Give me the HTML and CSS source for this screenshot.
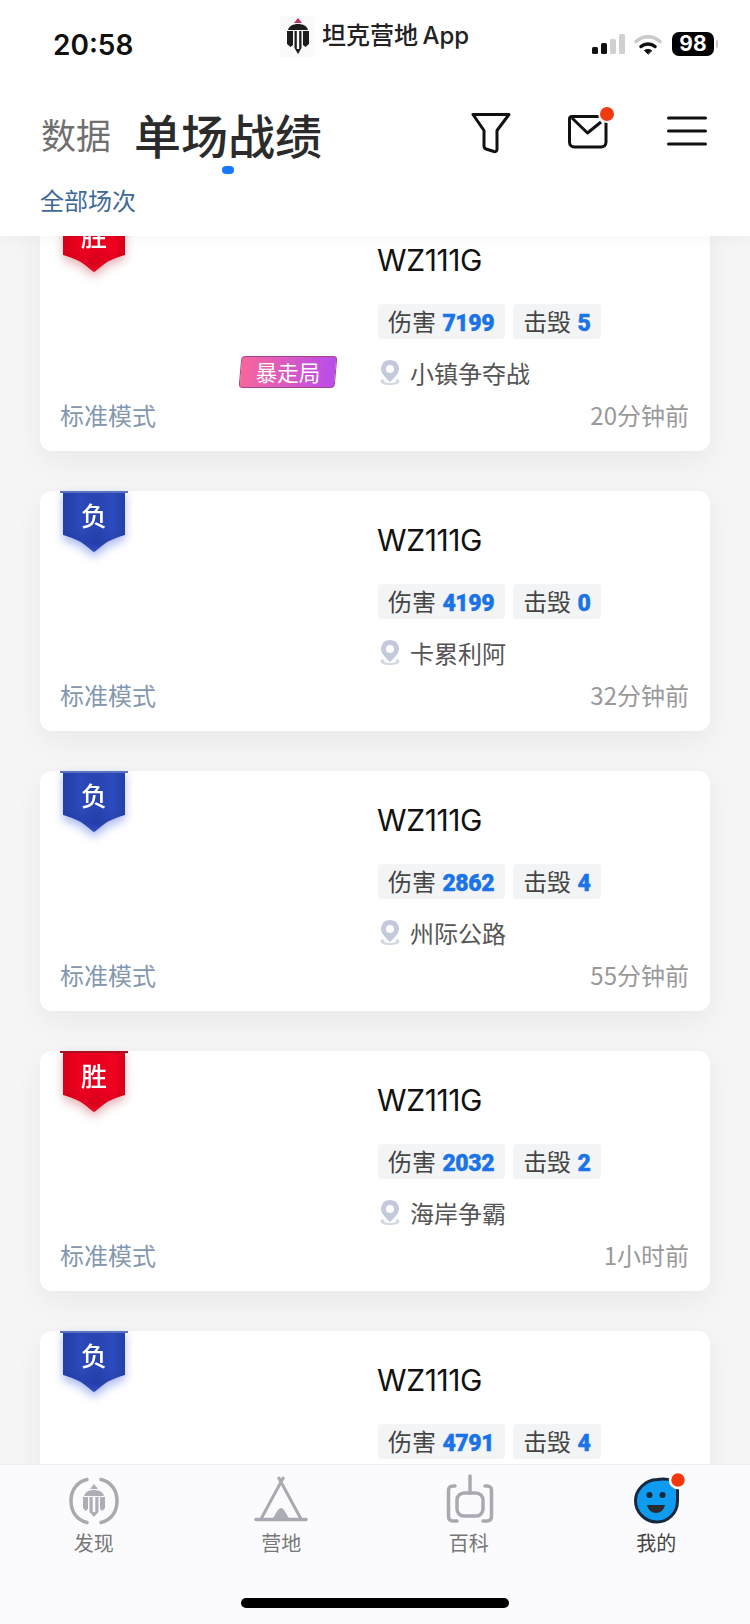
FILE: index.html
```html
<!DOCTYPE html>
<html lang="zh-CN">
<head>
  <meta charset="UTF-8" />
  <meta name="viewport" content="width=device-width, initial-scale=1" />
  <title>单场战绩</title>
  <link rel="stylesheet" href="styles.css">
</head>
<body>
  <div class="app">
    <header class="header">
      <div class="status">
        <span class="clock">20:58</span>
        <div class="source">
          <span class="source-logo">
            <svg width="22" height="36" viewBox="0 0 22 36">
              <path d="M11 0 15 5H7Z" fill="#c2305f"/>
              <path d="M11 6C16 6 20 8 21 12H1C2 8 6 6 11 6Z" fill="#1c1c1c"/>
              <path d="M0 13H6V27L3.500 29 0 26ZM16 13H22V26L18.500 29 16 27ZM7.500 13H9.800V31H12.200V13H14.500V30L11 36 7.500 30Z" fill="#1c1c1c"/>
            </svg>
          </span>
          <span class="source-name">坦克营地 App</span>
        </div>
        <div class="status-right">
          <svg width="33" height="20" viewBox="0 0 33 20">
            <rect x="0" y="13" width="6" height="7" rx="1.500" fill="#111"/>
            <rect x="9" y="9" width="6" height="11" rx="1.500" fill="#111"/>
            <rect x="18" y="5" width="6" height="15" rx="1.500" fill="#d0d0d0"/>
            <rect x="27" y="0" width="6" height="20" rx="1.500" fill="#d0d0d0"/>
          </svg>
          <svg class="wifi" width="28" height="21" viewBox="0 0 28 21" fill="none" stroke-linecap="round">
            <path d="M2 7.500C9 1 19 1 26 7.500" stroke="#c9c9c9" stroke-width="3.500"/>
            <path d="M7 12.500C11 9 17 9 21 12.500" stroke="#111" stroke-width="3.500"/>
            <path d="M14 20 10.500 16.500C12.500 15 15.500 15 17.500 16.500Z" fill="#111" stroke="#111"/>
          </svg>
          <span class="battery">98</span>
          <span class="battery-nub"></span>
        </div>
      </div>

      <div class="title-row">
        <nav class="tabs">
          <span class="tab">数据</span>
          <span class="tab tab-active">单场战绩</span>
        </nav>
        <div class="actions">
          <svg class="action-filter" width="40" height="42" viewBox="0 0 40 42" fill="none" stroke="#111" stroke-width="3" stroke-linejoin="round">
            <path d="M2 2.500H38L26 18.500V37C26 39 25 40 23 39.500L15 37C13.500 36.500 13 36 13 34V18.500Z"/>
          </svg>
          <svg class="action-mail" width="44" height="44" viewBox="0 0 44 44" fill="none" stroke="#111" stroke-width="3" stroke-linejoin="round">
            <path d="M35 9.500H5C3.500 9.500 2.500 10.500 2.500 12V35C2.500 38 4.500 40 7.500 40H34C37 40 39 38 39 35V12"/>
            <path d="M5 11 20.500 26 34 15"/>
            <circle cx="40" cy="7" r="8" fill="#f03a12" stroke="#fff" stroke-width="2"/>
          </svg>
          <svg class="action-menu" width="40" height="30" viewBox="0 0 40 30" stroke="#111" stroke-width="3" stroke-linecap="round">
            <path d="M1.500 2H38.500M1.500 15H38.500M1.500 28H38.500"/>
          </svg>
        </div>
      </div>

      <div class="filter-label">全部场次</div>
    </header>

    <main class="content">
      <div class="battle-list">

        <article class="card">
          <div class="card-body">
            <div class="card-left">
              <div class="ribbon ribbon-win"><div class="ribbon-cloth">胜</div></div>
              <span class="rampage">暴走局</span>
            </div>
            <div class="card-right">
              <h2 class="tank">WZ111G</h2>
              <div class="stats">
                <span class="stat">伤害 <b>7199</b></span>
                <span class="stat">击毁 <b>5</b></span>
              </div>
              <div class="map">
                <svg class="pin" width="24" height="26" viewBox="0 0 24 26"><path d="M5 19C1 20 1 25 12 25S23 20 19 19L17 20.500C19 21 18 23 12 23S5 21 7 20.500Z" fill="#d3d8e6"/><path d="M12 0C6 0 3 4 3 9 3 14 9 19 12 22 15 19 21 14 21 9 21 4 18 0 12 0ZM12 5A4 4 0 1 1 12 13 4 4 0 1 1 12 5Z" fill="#c3cadc" fill-rule="evenodd"/></svg>
                小镇争夺战
              </div>
            </div>
          </div>
          <div class="card-foot"><span class="mode">标准模式</span><span class="time">20分钟前</span></div>
        </article>

        <article class="card">
          <div class="card-body">
            <div class="card-left">
              <div class="ribbon ribbon-lose"><div class="ribbon-cloth">负</div></div>
            </div>
            <div class="card-right">
              <h2 class="tank">WZ111G</h2>
              <div class="stats">
                <span class="stat">伤害 <b>4199</b></span>
                <span class="stat">击毁 <b>0</b></span>
              </div>
              <div class="map">
                <svg class="pin" width="24" height="26" viewBox="0 0 24 26"><path d="M5 19C1 20 1 25 12 25S23 20 19 19L17 20.500C19 21 18 23 12 23S5 21 7 20.500Z" fill="#d3d8e6"/><path d="M12 0C6 0 3 4 3 9 3 14 9 19 12 22 15 19 21 14 21 9 21 4 18 0 12 0ZM12 5A4 4 0 1 1 12 13 4 4 0 1 1 12 5Z" fill="#c3cadc" fill-rule="evenodd"/></svg>
                卡累利阿
              </div>
            </div>
          </div>
          <div class="card-foot"><span class="mode">标准模式</span><span class="time">32分钟前</span></div>
        </article>

        <article class="card">
          <div class="card-body">
            <div class="card-left">
              <div class="ribbon ribbon-lose"><div class="ribbon-cloth">负</div></div>
            </div>
            <div class="card-right">
              <h2 class="tank">WZ111G</h2>
              <div class="stats">
                <span class="stat">伤害 <b>2862</b></span>
                <span class="stat">击毁 <b>4</b></span>
              </div>
              <div class="map">
                <svg class="pin" width="24" height="26" viewBox="0 0 24 26"><path d="M5 19C1 20 1 25 12 25S23 20 19 19L17 20.500C19 21 18 23 12 23S5 21 7 20.500Z" fill="#d3d8e6"/><path d="M12 0C6 0 3 4 3 9 3 14 9 19 12 22 15 19 21 14 21 9 21 4 18 0 12 0ZM12 5A4 4 0 1 1 12 13 4 4 0 1 1 12 5Z" fill="#c3cadc" fill-rule="evenodd"/></svg>
                州际公路
              </div>
            </div>
          </div>
          <div class="card-foot"><span class="mode">标准模式</span><span class="time">55分钟前</span></div>
        </article>

        <article class="card">
          <div class="card-body">
            <div class="card-left">
              <div class="ribbon ribbon-win"><div class="ribbon-cloth">胜</div></div>
            </div>
            <div class="card-right">
              <h2 class="tank">WZ111G</h2>
              <div class="stats">
                <span class="stat">伤害 <b>2032</b></span>
                <span class="stat">击毁 <b>2</b></span>
              </div>
              <div class="map">
                <svg class="pin" width="24" height="26" viewBox="0 0 24 26"><path d="M5 19C1 20 1 25 12 25S23 20 19 19L17 20.500C19 21 18 23 12 23S5 21 7 20.500Z" fill="#d3d8e6"/><path d="M12 0C6 0 3 4 3 9 3 14 9 19 12 22 15 19 21 14 21 9 21 4 18 0 12 0ZM12 5A4 4 0 1 1 12 13 4 4 0 1 1 12 5Z" fill="#c3cadc" fill-rule="evenodd"/></svg>
                海岸争霸
              </div>
            </div>
          </div>
          <div class="card-foot"><span class="mode">标准模式</span><span class="time">1小时前</span></div>
        </article>

        <article class="card">
          <div class="card-body">
            <div class="card-left">
              <div class="ribbon ribbon-lose"><div class="ribbon-cloth">负</div></div>
            </div>
            <div class="card-right">
              <h2 class="tank">WZ111G</h2>
              <div class="stats">
                <span class="stat">伤害 <b>4791</b></span>
                <span class="stat">击毁 <b>4</b></span>
              </div>
            </div>
          </div>
        </article>

      </div>
    </main>

    <footer class="tabbar">
      <div class="tabbar-items">
        <div class="tabbar-item">
          <svg width="52" height="50" viewBox="0 0 52 50" fill="none">
            <path d="M19 3.500C9 6 3 14 3 25S9 44 19 46.500M33 3.500C43 6 49 14 49 25S43 44 33 46.500" stroke="#a9a9b1" stroke-width="3.500" stroke-linecap="round"/>
            <path d="M26 8 30 13H22Z" fill="#adadb6"/>
            <path d="M26 14C31 14 35 16 36 20H16C17 16 21 14 26 14Z" fill="#adadb6"/>
            <path d="M15 21H20V33L17.500 35 15 32ZM32 21H37V32L34.500 35 32 33ZM21.500 21H24.700V36H27.300V21H30.500V36L26 41 21.500 36Z" fill="#adadb6"/>
          </svg>
          <span class="tabbar-label">发现</span>
        </div>
        <div class="tabbar-item">
          <svg width="52" height="50" viewBox="0 0 52 50" fill="none" stroke="#a9a9b1">
            <path d="M23.300 1 46 43M28.700 1 6 43" stroke-width="3"/>
            <path d="M1 43.500H51" stroke-width="3.500" stroke-linecap="round"/>
            <path d="M26 32C29 32 31 38 34 42H18C21 38 23 32 26 32Z" fill="#adadb6" stroke="none"/>
          </svg>
          <span class="tabbar-label">营地</span>
        </div>
        <div class="tabbar-item">
          <svg width="52" height="50" viewBox="0 0 52 50" fill="none" stroke="#a9a9b1" stroke-width="3.500" stroke-linecap="round">
            <path d="M27 0V17"/>
            <rect x="14" y="17" width="26" height="23" rx="7"/>
            <path d="M12 10H10C7 10 5.500 12 5.500 14V40C5.500 43 7 45 10 45H14M42 10H44C47 10 48.500 12 48.500 14V40C48.500 43 47 45 44 45H40"/>
          </svg>
          <span class="tabbar-label">百科</span>
        </div>
        <div class="tabbar-item tabbar-active">
          <svg class="face" width="52" height="50" viewBox="0 0 52 50">
            <path d="M27 3.500C38 2 47.500 4 47.500 14V25C47.500 37 38 46 27 46 15 46 5.500 36 5.500 25S15 4 27 3.500Z" fill="#0f9bf0" stroke="#16283c" stroke-width="3"/>
            <circle cx="19.500" cy="19" r="3" fill="#16283c"/>
            <circle cx="32.500" cy="19" r="3" fill="#16283c"/>
            <path d="M17 29H35C34 34 30 37 26 37S18 34 17 29Z" fill="#2a2a2e"/>
            <circle cx="48" cy="4" r="8" fill="#f5380c" stroke="#fff" stroke-width="2.500"/>
          </svg>
          <span class="tabbar-label">我的</span>
        </div>
      </div>
      <div class="home-bar"></div>
    </footer>
  </div>
</body>
</html>
```

FILE: styles.css
```css
* {
  box-sizing: border-box;
}
body {
  margin: 0;
  font-family: "Noto Sans CJK SC", "Liberation Sans", sans-serif;
  background: #f5f5f6;
  color: #333;
}
svg {
  display: block;
  overflow: visible;
}
.app {
  width: 750px;
  height: 1624px;
  display: flex;
  flex-direction: column;
  overflow: hidden;
}

/* header */
.header {
  position: relative;
  z-index: 2;
  height: 236px;
  flex: none;
  background: #fff;
  box-shadow: 0 4px 14px rgba(0,0,0,0.03);
}
.status {
  height: 88px;
  padding-left: 53px;
  display: grid;
  grid-template-columns: 227px 312px auto;
  align-items: center;
}
.clock {
  margin-top: 2px;
  font-family: Inter, sans-serif;
  font-size: 28px;
  font-weight: 600;
  color: #111;
}
.source {
  display: flex;
  align-items: center;
  gap: 7px;
  margin-top: -16px;
}
.source-logo {
  width: 35px;
  height: 41px;
  background: #fafafa;
  display: flex;
  align-items: center;
  justify-content: center;
}
.source-name {
  font-size: 24px;
  font-weight: 500;
  line-height: 32px;
  color: #222;
  font-family: Inter, "Noto Sans CJK SC", sans-serif;
  word-spacing: -2px;
}
.status-right {
  display: flex;
  align-items: center;
}
.wifi {
  margin-left: 9px;
}
.battery {
  width: 42px;
  height: 24px;
  margin-left: 10px;
  background: #000;
  border-radius: 7px;
  color: #fff;
  font-family: Inter, sans-serif;
  font-size: 21px;
  font-weight: 700;
  line-height: 24px;
  text-align: center;
}
.battery-nub {
  width: 2px;
  height: 8px;
  margin-left: 2px;
  border-radius: 0 2px 2px 0;
  background: #c8c8c8;
}
.title-row {
  height: 96px;
  padding: 0 43px 0 41px;
  display: flex;
  align-items: flex-start;
  justify-content: space-between;
}
.tabs {
  display: flex;
  align-items: center;
  gap: 23px;
  height: 92px;
}
.tab {
  font-size: 35px;
  line-height: 60px;
  color: #707070;
}
.tab-active {
  position: relative;
  font-size: 47px;
  font-weight: 500;
  color: #2b2b2b;
}
.tab-active::after {
  content: "";
  position: absolute;
  left: 88px;
  top: 62px;
  width: 12px;
  height: 8px;
  border-radius: 4px;
  background: #1677ff;
}
.actions {
  margin-top: 19px;
  display: flex;
  align-items: flex-start;
  gap: 56px;
}
.action-filter {
  margin-top: 5px;
}
.action-menu {
  margin-top: 9px;
}
.filter-label {
  padding-left: 40px;
  font-size: 24px;
  line-height: 32px;
  color: #3f6a98;
}

/* list */
.content {
  flex: 1;
  min-height: 0;
  overflow: hidden;
}
.battle-list {
  margin-top: -25px;
  padding: 0 40px;
  display: flex;
  flex-direction: column;
  gap: 40px;
}
.card {
  height: 240px;
  flex: none;
  background: #fff;
  border-radius: 12px;
  box-shadow: 0 10px 30px rgba(0,0,0,0.05);
}
.card-body {
  height: 182px;
  display: grid;
  grid-template-columns: 338px 1fr;
}
.card-left {
  display: flex;
  flex-direction: column;
  justify-content: space-between;
  padding: 0 40px 5px 23px;
}
.ribbon {
  position: relative;
  width: 62px;
  align-self: flex-start;
  filter: drop-shadow(0 5px 5px rgba(180,20,30,0.3));
}
.ribbon::before {
  content: "";
  position: absolute;
  left: -3px;
  top: 0;
  width: 68px;
  height: 2px;
  z-index: 1;
}
.ribbon-cloth {
  height: 61px;
  padding-top: 5px;
  clip-path: path("M0 0H62V44C55 46 46 49 40 54 36 57 33 60 31 61 29 60 26 57 22 54 16 49 7 46 0 44Z");
  color: #fff;
  font-size: 26px;
  font-weight: 500;
  line-height: 38px;
  text-align: center;
}
.ribbon-win::before {
  background: #a90f22;
}
.ribbon-win .ribbon-cloth {
  background: linear-gradient(180deg, transparent 62%, rgba(120,0,20,0.12) 85%, rgba(255,60,80,0.25)),
    linear-gradient(90deg, #d80018, #ee0020 30%, #e6001c 55%, #f20022 80%, #d80018);
}
.ribbon-lose {
  filter: drop-shadow(0 5px 5px rgba(50,80,220,0.4));
}
.ribbon-lose::before {
  background: #5d70c4;
}
.ribbon-lose .ribbon-cloth {
  background: linear-gradient(180deg, transparent 62%, rgba(10,30,120,0.15) 85%, rgba(90,120,240,0.25)),
    linear-gradient(90deg, #2340a6, #2b49ba 30%, #2744b0 55%, #2c4bbd 80%, #2340a6);
}
.rampage {
  position: relative;
  isolation: isolate;
  align-self: flex-end;
  width: 100px;
  height: 32px;
  color: #fff;
  font-size: 21.5px;
  line-height: 31px;
  text-align: center;
}
.rampage::before {
  content: "";
  position: absolute;
  inset: 0 2px;
  z-index: -1;
  transform: skewX(-5deg);
  border: 1px solid #a5458f;
  border-radius: 4px;
  background: linear-gradient(90deg, #f8669a, #b94cec);
}
.card-right {
  padding-top: 31px;
}
.tank {
  margin: 0 0 0 -1px;
  font-family: Inter, sans-serif;
  font-size: 30px;
  font-weight: 400;
  line-height: 36px;
  color: #111;
  letter-spacing: -0.4px;
}
.stats {
  margin-top: 26px;
  display: flex;
  gap: 8px;
}
.stat {
  height: 35px;
  padding: 0 11px 0 10px;
  border-radius: 4px;
  background: #f3f4f6;
  font-size: 24px;
  line-height: 34px;
  color: #444;
  white-space: nowrap;
  word-spacing: 1px;
}
.stat b {
  font-family: Roboto, sans-serif;
  font-size: 23px;
  font-weight: 900;
  letter-spacing: -0.4px;
  color: #1a73e8;
  -webkit-text-stroke: 0.4px #1a73e8;
}
.map {
  margin-top: 16px;
  display: flex;
  align-items: center;
  gap: 8px;
  font-size: 24px;
  line-height: 36px;
  color: #555;
}
.card-foot {
  margin-top: 7px;
  padding: 0 21px 0 20px;
  display: flex;
  justify-content: space-between;
  font-size: 24px;
  line-height: 30px;
}
.mode {
  color: #8497ae;
}
.time {
  color: #999;
}

/* bottom tabs */
.tabbar {
  position: relative;
  z-index: 2;
  height: 160px;
  flex: none;
  background: #fbfbfd;
  border-top: 1px solid #eee;
}
.tabbar-items {
  display: flex;
  padding-top: 11px;
}
.tabbar-item {
  flex: 1;
  display: flex;
  flex-direction: column;
  align-items: center;
}
.tabbar-label {
  margin-top: 2px;
  font-size: 20px;
  line-height: 30px;
  color: #777;
}
.tabbar-active .tabbar-label {
  color: #444;
}
.home-bar {
  position: absolute;
  left: 241px;
  top: 133px;
  width: 268px;
  height: 10px;
  border-radius: 5px;
  background: #000;
}
```
